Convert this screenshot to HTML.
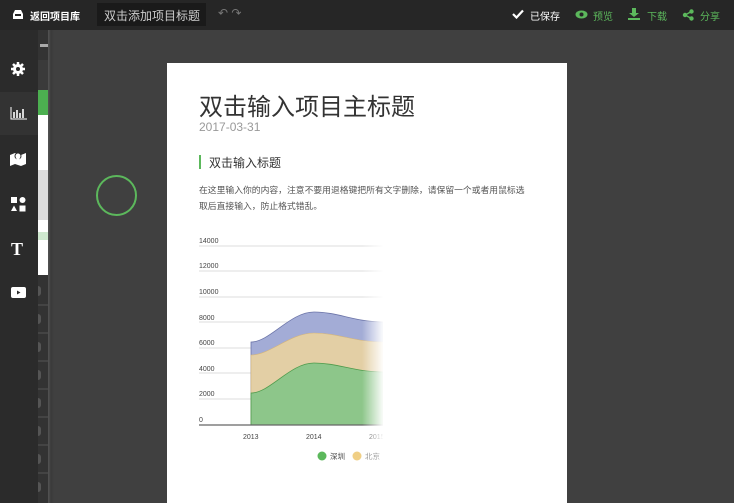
<!DOCTYPE html>
<html><head><meta charset="utf-8"><style>
*{margin:0;padding:0;box-sizing:border-box}
body{width:734px;height:503px;overflow:hidden;background:#404040;font-family:"Liberation Sans","Noto Sans CJK SC",sans-serif;position:relative}
.top{position:absolute;left:0;top:0;width:734px;height:30px;background:#262626;color:#fff;font-size:10px}
.top span{position:absolute;top:8px}
.side{position:absolute;left:0;top:30px;width:38px;height:473px;background:#2b2b2b}
.strip{position:absolute;left:38px;top:30px;width:10px;height:473px;background:#333}
.shadow{position:absolute;left:48px;top:30px;width:6px;height:473px;background:linear-gradient(90deg,#555,#3a3a3a,#404040)}
.card{position:absolute;left:167px;top:63px;width:400px;height:440px;background:#fff}
.tab{position:absolute;left:0;width:10px;height:2px;background:#444}
.tabd{position:absolute;left:0;width:3px;height:10px;background:#555;border-radius:0 5px 5px 0}
</style></head><body>
<div class="top">
<svg style="position:absolute;left:12px;top:9px" width="12" height="11" viewBox="0 0 12 11"><path d="M1 5 L3 1 H9 L11 5 V10 H1Z" fill="#fff"/><rect x="3" y="5" width="6" height="2" fill="#262626"/></svg>
<span style="left:30px;font-weight:bold">返回项目库</span>
<div style="position:absolute;left:97px;top:3px;width:109px;height:23px;background:#1a1a1a"></div>
<span style="left:104px;top:7px;font-size:12px;color:#ccc">双击添加项目标题</span>
<span style="left:218px;top:6px;color:#777;font-size:12px">↶ ↷</span>
<svg style="position:absolute;left:512px;top:9px" width="12" height="10"><path d="M1 5 L4.5 8.5 L11 1.5" stroke="#fff" stroke-width="2.2" fill="none"/></svg>
<span style="left:530px">已保存</span>
<svg style="position:absolute;left:575px;top:10px" width="13" height="9"><ellipse cx="6.5" cy="4.5" rx="6" ry="4" fill="#5cb85c"/><circle cx="6.5" cy="4.5" r="2" fill="#262626"/></svg>
<span style="left:593px;color:#5cb85c">预览</span>
<svg style="position:absolute;left:628px;top:8px" width="12" height="12"><path d="M4 0h4v5h3L6 9 1 5h3z M0 10h12v2H0z" fill="#5cb85c"/></svg>
<span style="left:647px;color:#5cb85c">下载</span>
<svg style="position:absolute;left:682px;top:9px" width="12" height="12"><circle cx="3" cy="6" r="2.2" fill="#5cb85c"/><circle cx="9.5" cy="2.5" r="2.2" fill="#5cb85c"/><circle cx="9.5" cy="9.5" r="2.2" fill="#5cb85c"/><path d="M3 6 9.5 2.5 M3 6 9.5 9.5" stroke="#5cb85c" stroke-width="1.4"/></svg>
<span style="left:700px;color:#5cb85c">分享</span>
</div>
<div class="side">
<div style="position:absolute;top:62px;left:0;width:38px;height:43px;background:#333"></div>
<svg style="position:absolute;left:11px;top:32px" width="14" height="14" viewBox="0 0 14 14"><circle cx="7" cy="7" r="5" fill="#fff"/><path d="M7 0v14M0 7h14M2 2l10 10M12 2 2 12" stroke="#fff" stroke-width="2.5"/><circle cx="7" cy="7" r="2" fill="#2b2b2b"/></svg>
<svg style="position:absolute;left:10px;top:77px" width="17" height="13"><path d="M1 0v12h16" stroke="#fff" fill="none"/><path d="M4 5v6M7 3v8M10 6v5M13 2v9" stroke="#fff" stroke-width="1.6"/></svg>
<svg style="position:absolute;left:10px;top:121px" width="16" height="15"><path d="M0 4 5 2 11 4 16 2V13L11 15 5 13 0 15Z" fill="#fff"/><circle cx="8" cy="5" r="3.5" fill="#2b2b2b"/><path d="M8 2.5a2.5 2.5 0 0 1 2.5 2.5C10.5 7 8 10 8 10S5.5 7 5.5 5A2.5 2.5 0 0 1 8 2.5Z" fill="#fff"/></svg>
<svg style="position:absolute;left:11px;top:167px" width="15" height="15"><rect x="0" y="0" width="6" height="6" fill="#fff"/><circle cx="11.5" cy="3" r="3" fill="#fff"/><path d="M3 8.5 6 14H0Z" fill="#fff"/><rect x="8.5" y="8.5" width="6" height="6" fill="#fff"/></svg>
<span style="position:absolute;left:11px;top:209px;color:#fff;font-family:'Liberation Serif',serif;font-size:18px;font-weight:bold">T</span>
<svg style="position:absolute;left:11px;top:257px" width="15" height="11"><rect width="15" height="11" rx="2" fill="#fff"/><path d="M6 3.5 9.5 5.5 6 7.5Z" fill="#2b2b2b"/></svg>
</div>
<div class="strip">
<div style="position:absolute;top:14px;left:2px;width:8px;height:3px;background:#aaa"></div>
<div style="position:absolute;top:30px;left:0;width:10px;height:30px;background:#3a3a3a"></div>
<div style="position:absolute;top:60px;left:0;width:10px;height:25px;background:#4caf50"></div>
<div style="position:absolute;top:85px;left:0;width:10px;height:160px;background:#fff"></div>
<div style="position:absolute;top:140px;left:0;width:10px;height:50px;background:#ddd"></div>
<div style="position:absolute;top:202px;left:0;width:10px;height:8px;background:#cfe8cf"></div>
<div class="tabd" style="top:256px"></div><div class="tab" style="top:274px"></div>
<div class="tabd" style="top:284px"></div><div class="tab" style="top:302px"></div>
<div class="tabd" style="top:312px"></div><div class="tab" style="top:330px"></div>
<div class="tabd" style="top:340px"></div><div class="tab" style="top:358px"></div>
<div class="tabd" style="top:368px"></div><div class="tab" style="top:386px"></div>
<div class="tabd" style="top:396px"></div><div class="tab" style="top:414px"></div>
<div class="tabd" style="top:424px"></div><div class="tab" style="top:442px"></div>
<div class="tabd" style="top:452px"></div>
</div>
<div class="shadow"></div>
<div style="position:absolute;left:96px;top:175px;width:41px;height:41px;border:2px solid #5cb85c;border-radius:50%"></div>
<div class="card">
<div style="position:absolute;left:32px;top:24px;font-size:24px;color:#333">双击输入项目主标题</div>
<div style="position:absolute;left:32px;top:57px;font-size:12px;color:#999">2017-03-31</div>
<div style="position:absolute;left:32px;top:92px;width:2px;height:14px;background:#5cb85c"></div>
<div style="position:absolute;left:42px;top:91px;font-size:12px;color:#333">双击输入标题</div>
<div style="position:absolute;left:32px;top:119px;width:330px;font-size:8.8px;line-height:16px;color:#555">在这里输入你的内容，注意不要用退格键把所有文字删除，请保留一个或者用鼠标选取后直接输入，防止格式错乱。</div>
</div>
<svg style="position:absolute;left:190px;top:230px" width="200" height="240" viewBox="190 230 200 240">
<g font-size="7" fill="#444" font-family="Liberation Sans">
<text x="199" y="243">14000</text><text x="199" y="268">12000</text><text x="199" y="294">10000</text><text x="199" y="320">8000</text><text x="199" y="345">6000</text><text x="199" y="371">4000</text><text x="199" y="396">2000</text><text x="199" y="422">0</text>
<text x="243" y="439">2013</text><text x="306" y="439">2014</text><text x="369" y="439">2015</text>
</g>
<g stroke="#ddd" stroke-width="1"><path d="M199 246H383M199 271H383M199 297H383M199 322H383M199 348H383M199 373H383M199 399H383"/></g>
<path d="M251 342C270 342 290 312 314 312S355 322 383 322V425H251Z" fill="#a3acd6" stroke="#6b74a8" stroke-width=".8"/>
<path d="M251 355C270 355 290 333 314 333S355 342 383 342V425H251Z" fill="#e3cfa5" stroke="#d4b57a" stroke-width=".6"/>
<path d="M251 393C270 393 290 363 314 363S355 372 383 372V425H251Z" fill="#8dc68a" stroke="#4e9a4b" stroke-width=".8"/>
<path d="M199 425H383" stroke="#666" stroke-width="1.2"/>
<defs><linearGradient id="f" x1="0" x2="1"><stop offset="0" stop-color="#fff" stop-opacity="0"/><stop offset="1" stop-color="#fff"/></linearGradient></defs>
<rect x="362" y="240" width="22" height="210" fill="url(#f)"/>
<rect x="383" y="235" width="10" height="230" fill="#fff"/>
<circle cx="322" cy="456" r="4.5" fill="#5cb85c"/><text x="330" y="459" font-size="7.5" fill="#444">深圳</text>
<circle cx="357" cy="456" r="4.5" fill="#f0cf85"/><text x="365" y="459" font-size="7.5" fill="#999">北京</text>
<rect x="375" y="448" width="12" height="14" fill="url(#f)"/>
</svg>
</body></html>
